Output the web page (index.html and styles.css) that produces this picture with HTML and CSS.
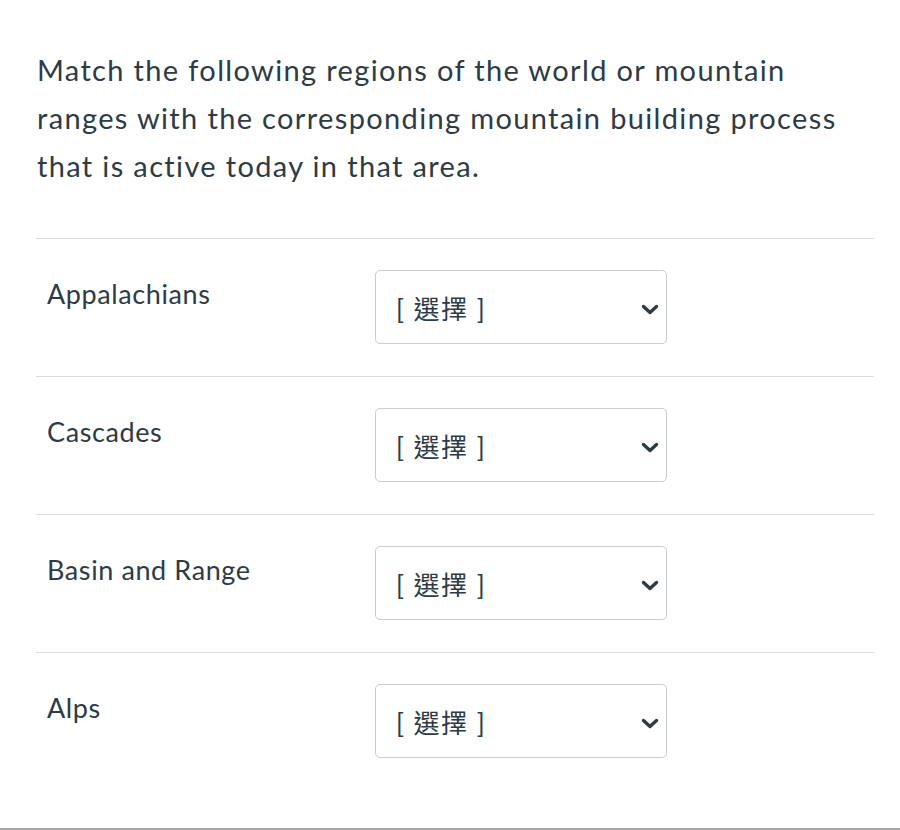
FILE: index.html
```html
<!DOCTYPE html>
<html>
<head>
<meta charset="utf-8">
<link rel="stylesheet" href="styles.css">
</head>
<body>
<div class="page">
  <p class="question">Match the following regions of the world or mountain ranges with the corresponding mountain building process that is active today in that area.</p>
  <div class="answers">
    <div class="row">
      <div class="label">Appalachians</div>
      <div class="select"><span class="sel-text">[ 選擇 ]</span><svg class="chev" viewBox="0 0 18 11" width="18" height="11"><path d="M2.5 2.5 L9 8.5 L15.5 2.5" fill="none" stroke="#2d3b45" stroke-width="3.4" stroke-linecap="round" stroke-linejoin="round"/></svg></div>
    </div>
    <div class="row">
      <div class="label">Cascades</div>
      <div class="select"><span class="sel-text">[ 選擇 ]</span><svg class="chev" viewBox="0 0 18 11" width="18" height="11"><path d="M2.5 2.5 L9 8.5 L15.5 2.5" fill="none" stroke="#2d3b45" stroke-width="3.4" stroke-linecap="round" stroke-linejoin="round"/></svg></div>
    </div>
    <div class="row">
      <div class="label">Basin and Range</div>
      <div class="select"><span class="sel-text">[ 選擇 ]</span><svg class="chev" viewBox="0 0 18 11" width="18" height="11"><path d="M2.5 2.5 L9 8.5 L15.5 2.5" fill="none" stroke="#2d3b45" stroke-width="3.4" stroke-linecap="round" stroke-linejoin="round"/></svg></div>
    </div>
    <div class="row">
      <div class="label">Alps</div>
      <div class="select"><span class="sel-text">[ 選擇 ]</span><svg class="chev" viewBox="0 0 18 11" width="18" height="11"><path d="M2.5 2.5 L9 8.5 L15.5 2.5" fill="none" stroke="#2d3b45" stroke-width="3.4" stroke-linecap="round" stroke-linejoin="round"/></svg></div>
    </div>
  </div>
</div>
<div class="bottom-line"></div>
</body>
</html>
```
FILE: styles.css
```css
html, body {
  margin: 0;
  padding: 0;
  background: #fff;
}
body {
  font-family: Lato, "Noto Sans CJK TC", sans-serif;
  color: #2d3b45;
  height: 830px;
  position: relative;
  overflow: hidden;
}
.page {
  padding: 46px 26px 0 36px;
}
.question {
  margin: 0 0 48px 1px;
  font-size: 29px;
  letter-spacing: 1.35px;
  line-height: 48px;
}
.row {
  border-top: 1px solid #dcdcdc;
  display: flex;
  align-items: flex-start;
  height: 137px;
}
.label {
  width: 328px;
  padding: 40px 0 0 11px;
  font-size: 27px;
  letter-spacing: 0.6px;
  line-height: 30px;
}
.select {
  margin-top: 31px;
  border: 1px solid #c7cdd1;
  border-radius: 5px;
  display: flex;
  align-items: center;
  justify-content: space-between;
  padding: 0 7px 0 20px;
  box-sizing: border-box;
  width: 292px;
  height: 74px;
}
.sel-text {
  font-size: 26px;
  letter-spacing: 1.5px;
  color: #2d3b45;
  margin-top: 0;
}
.chev {
  margin-top: 4px;
}
.bottom-line {
  position: absolute;
  left: 0;
  right: 0;
  bottom: 0;
  height: 2px;
  background: #a5a5a5;
}
```
